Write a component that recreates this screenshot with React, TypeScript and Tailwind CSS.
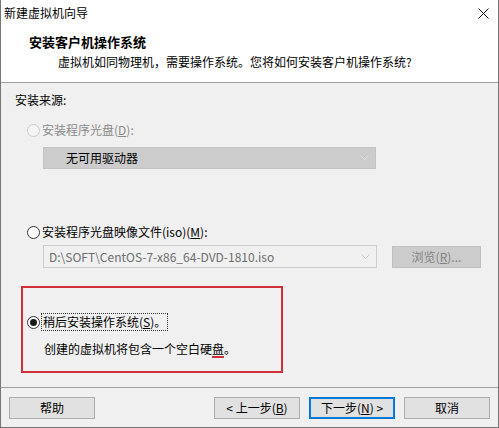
import React from "react";

const font = { fontFamily: '"Noto Sans CJK SC", "Noto Sans", sans-serif' };

function Radio({ checked, disabled }: { checked?: boolean; disabled?: boolean }) {
  return (
    <div
      className={
        "w-[13px] h-[13px] rounded-full border flex items-center justify-center shrink-0 " +
        (disabled ? "border-[#cbcbcb] bg-[#f4f4f4]" : "border-[#333333] bg-white")
      }
    >
      {checked && <div className="w-[7px] h-[7px] rounded-full bg-[#1a1a1a]" />}
    </div>
  );
}

function Chevron({ color }: { color: string }) {
  return (
    <svg width="9" height="6" viewBox="0 0 9 6">
      <path d="M0.5 0.5 L4.5 4.5 L8.5 0.5" fill="none" stroke={color} strokeWidth="1" />
    </svg>
  );
}

function Btn({ children, focus }: { children: React.ReactNode; focus?: boolean }) {
  return (
    <div
      className={
        "w-[86px] h-[22px] flex items-center justify-center bg-[#e1e1e1] text-[12px] text-black " +
        (focus ? "border-2 border-[#0078d7]" : "border border-[#adadad]")
      }
    >
      {children}
    </div>
  );
}

export default function App() {
  return (
    <div
      className="w-[499px] h-[428px] bg-[#f0f0f0] border-l border-r border-b border-[#777777] flex flex-col text-[12px] leading-[16px] text-black"
      style={font}
    >
      {/* title + header */}
      <div className="h-[82px] bg-white flex flex-col">
        <div className="h-[28px] flex items-start justify-between">
          <div className="pl-[3px] pt-[5px]">新建虚拟机向导</div>
          <div className="pt-[8px] pr-[9px]">
            <svg width="11" height="11" viewBox="0 0 11 11">
              <path d="M0.5 0.5 L10.5 10.5 M10.5 0.5 L0.5 10.5" stroke="#111" strokeWidth="1" />
            </svg>
          </div>
        </div>
        <div className="pl-[28px] pt-[6px] text-[13px] font-bold leading-[16px]">安装客户机操作系统</div>
        <div className="pl-[57px] pt-[4px]">虚拟机如同物理机，需要操作系统。您将如何安装客户机操作系统?</div>
      </div>
      <div className="h-px bg-[#a0a0a0]" />

      <div className="mt-[9px] pl-[14px] h-[16px]">安装来源:</div>

      <div className="mt-[14px] pl-[26px] h-[16px] flex items-center gap-[2px]">
        <Radio disabled />
        <span className="text-[#8a8a8a]">
          安装程序光盘(<span className="underline">D</span>):
        </span>
      </div>

      <div className="mt-[9px] ml-[42px] w-[333px] h-[22px] bg-[#cccccc] border border-[#c4c4c4] flex items-center justify-between pl-[22px] pr-[6px]">
        <span>无可用驱动器</span>
        <Chevron color="#e0e0e0" />
      </div>

      <div className="mt-[55px] pl-[26px] h-[16px] flex items-center gap-[2px]">
        <Radio />
        <span>
          安装程序光盘映像文件(iso)(<span className="underline">M</span>):
        </span>
      </div>

      <div className="mt-[5px] flex items-center">
        <div className="ml-[42px] w-[334px] h-[23px] bg-[#f0f0f0] border border-[#cccccc] flex items-center justify-between pl-[5px] pr-[6px]">
          <span className="text-[#6d6d6d]">D:\SOFT\CentOS-7-x86_64-DVD-1810.iso</span>
          <Chevron color="#c8c8c8" />
        </div>
        <div className="ml-[15px] w-[89px] h-[22px] bg-[#cccccc] border border-[#bfbfbf] flex items-center justify-center text-[#838383]">
          浏览(<span className="underline">R</span>)...
        </div>
      </div>

      <div className="mt-[18px] ml-[20px] w-[262px] h-[87px] border-2 border-[#d0303a] flex flex-col pl-[4px]">
        <div className="mt-[26px] h-[16px] flex items-center gap-[1px]">
          <Radio checked />
          <span className="border border-dotted border-[#333] leading-[16px] px-px">
            稍后安装操作系统(<span className="underline">S</span>)。
          </span>
        </div>
        <div className="mt-[11px] pl-[17px] h-[16px] flex">
          <span>创建的虚拟机将包含一个空白硬</span>
          <span className="relative">
            盘
            <span className="absolute left-0 right-0 bottom-[-1px] h-[2px] bg-[#d0303a]" />
          </span>
          <span>。</span>
        </div>
      </div>

      <div className="mt-[14px] h-px bg-[#a0a0a0]" />

      <div className="mt-[9px] flex items-center pl-[8px]">
        <Btn>帮助</Btn>
        <div className="ml-[119px]">
          <Btn>
            &lt; 上一步(<span className="underline">B</span>)
          </Btn>
        </div>
        <div className="ml-[9px]">
          <Btn focus>
            下一步(<span className="underline">N</span>) &gt;
          </Btn>
        </div>
        <div className="ml-[9px]">
          <Btn>取消</Btn>
        </div>
      </div>
    </div>
  );
}
